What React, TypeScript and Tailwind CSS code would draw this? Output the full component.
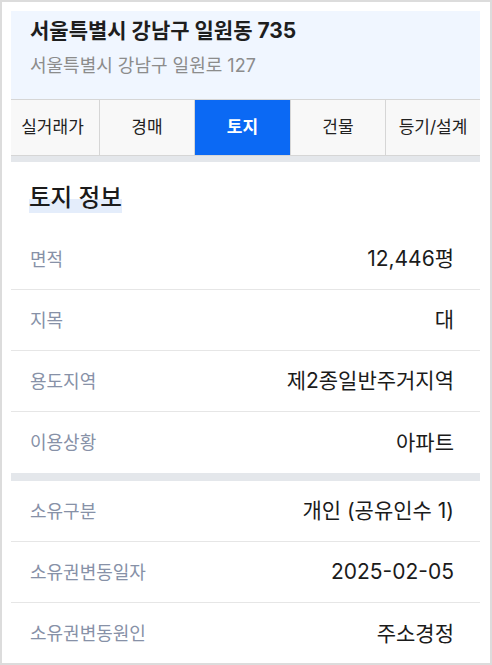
import React from "react";

const tabs = [
  { label: "실거래가", w: "w-[89px] pr-[5px]" },
  { label: "경매", w: "w-[95px]" },
  { label: "토지", w: "w-[96px]", active: true },
  { label: "건물", w: "w-[95px]" },
  { label: "등기/설계", w: "flex-1" },
];

const landRows = [
  ["면적", "12,446평"],
  ["지목", "대"],
  ["용도지역", "제2종일반주거지역"],
  ["이용상황", "아파트"],
];

const ownRows = [
  ["소유구분", "개인 (공유인수 1)"],
  ["소유권변동일자", "2025-02-05"],
  ["소유권변동원인", "주소경정"],
];

function Row({ label, value, last }: { label: string; value: string; last?: boolean }) {
  return (
    <div
      className={
        "flex h-[61px] items-center justify-between pl-[19px] pr-[26px] " +
        (last ? "" : "border-b border-[#e6e6e6]")
      }
    >
      <span className="text-[18px] text-[#8791a7]">{label}</span>
      <span className="text-[21px] text-[#1b1b1b]">{value}</span>
    </div>
  );
}

export default function App() {
  return (
    <div
      className="h-[665px] w-[492px] overflow-hidden border-2 border-[#dcdcdc] bg-white pl-[9px] pr-[10px] pt-[9px]"
      style={{ fontFamily: 'Inter, "Noto Sans CJK KR", "Noto Sans", sans-serif' }}
    >
      <div className="w-[469px]">
        <div className="flex h-[89px] flex-col border-b border-[#d6d6d6] bg-[#f0f6ff] px-[19px]">
          <div className="flex h-[40px] items-center text-[21px] font-bold text-[#1e1e1e]">
            서울특별시 강남구 일원동 735
          </div>
          <div className="flex h-[28px] items-center text-[18px] text-[#8c8c8c]">
            서울특별시 강남구 일원로 127
          </div>
        </div>
        <div className="flex h-[56px] border-b border-[#d6d6d6] bg-[#f8f8f8]">
          {tabs.map((t, i) => (
            <div
              key={t.label}
              className={
                "flex items-center justify-center text-[17px] " +
                t.w +
                " " +
                (i < tabs.length - 1 ? "border-r border-[#d6d6d6] " : "") +
                (t.active ? "bg-[#0b69f4] font-bold text-white" : "text-[#222222]")
              }
            >
              {t.label}
            </div>
          ))}
        </div>
        <div className="h-[6px] bg-[#e4e7eb]" />
        <div className="h-[67px] pl-[18px] pt-[21px]">
          <span className="inline-block bg-[linear-gradient(transparent_52%,#e4edfb_52%)] text-[23.5px] font-medium leading-[30px] text-[#1b1b1b]">
            토지 정보
          </span>
        </div>
        {landRows.map((r, i) => (
          <Row key={r[0]} label={r[0]} value={r[1]} last={i === landRows.length - 1} />
        ))}
        <div className="h-[8px] bg-[#e4e7eb]" />
        {ownRows.map((r, i) => (
          <Row key={r[0]} label={r[0]} value={r[1]} last={i === ownRows.length - 1} />
        ))}
      </div>
    </div>
  );
}
